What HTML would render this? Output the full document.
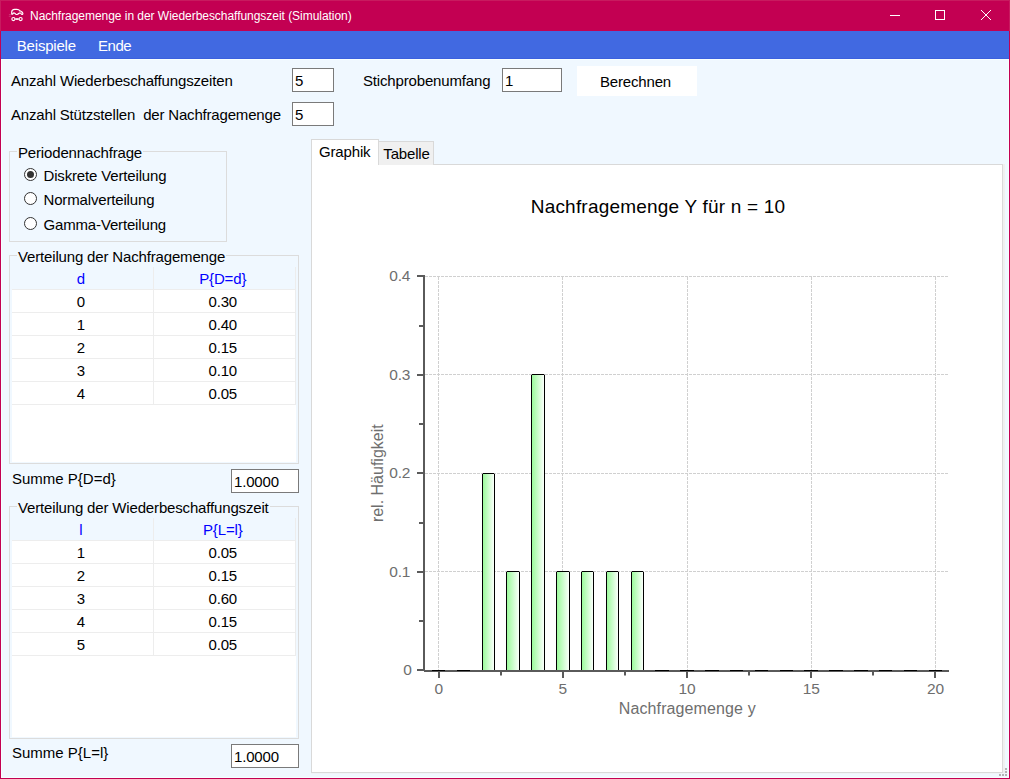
<!DOCTYPE html>
<html lang="de"><head><meta charset="utf-8">
<title>Nachfragemenge in der Wiederbeschaffungszeit (Simulation)</title>
<style>
html,body{margin:0;padding:0}
body{width:1010px;height:779px;overflow:hidden;background:#F0F8FF;position:relative;
 font-family:"Liberation Sans",sans-serif;font-size:15px;letter-spacing:-0.16px;color:#000;font-variant-ligatures:none}
div{position:absolute;box-sizing:border-box;white-space:pre}
.t{line-height:17px}
.title{left:0;top:0;width:1010px;height:31px;background:#C30052}
.title .cap{left:30px;top:9px;color:#fff;font-size:12px;letter-spacing:-0.04px;line-height:15px}
.menu{left:1px;top:31px;width:1008px;height:28px;background:#4169E1;border-bottom:1px solid #3B60DE;color:#fff;font-size:15px;letter-spacing:-0.2px}
.menu div{line-height:28px;top:1px}
.wb{background:#C30052}
.in{background:#fff;border:1px solid #7A7A7A;height:24px;line-height:22px;padding-left:2px;padding-top:1px}
.btn{left:577px;top:66px;width:120px;height:30px;background:#fff;text-align:center;line-height:32px;padding-right:3px}
.gb{border:1px solid #DCDCDC}
.lg{background:#F0F8FF;line-height:17px;padding:0 1px}
.rb{width:13px;height:13px;border-radius:50%;border:1px solid #333;background:#fff}
.rb.on::after{content:"";position:absolute;left:2px;top:2px;width:7px;height:7px;border-radius:50%;background:#333}
.gridbg{left:12px;width:284px;background:#fff}
.hc{height:23px;line-height:23px;text-align:center;color:#0000FF;padding-right:3.5px}
.c{height:23px;line-height:23px;text-align:center;padding-right:3.5px}
.hl{left:12px;width:284px;height:1px;background:#EDEDED}
.vl{left:153px;width:1px;background:#EDEDED}
.tabsel{left:311px;top:139px;width:68px;height:26px;background:#fff;border:1px solid #D9D9D9;border-bottom:none}
.tab2{left:378px;top:141px;width:56px;height:24px;background:#F0F0F0;border:1px solid #D9D9D9;border-bottom:none}
.panel{left:311px;top:164px;width:692px;height:609px;background:#fff;border:1px solid #D9D9D9}
svg{position:absolute;left:0;top:0}
svg .g{stroke:#D0D0D0;stroke-width:1;stroke-dasharray:3 1}
svg .ax{stroke:#5A5A5A;stroke-width:2}
svg text{letter-spacing:0;font-variant-ligatures:none}
svg .lb{font-size:15.5px;fill:#6E6E6E;letter-spacing:-0.2px}
svg .at{font-size:16px;fill:#6E6E6E}
svg .ti{font-size:19px;fill:#000;letter-spacing:0.2px}
</style></head><body>
<div class="title">
 <svg width="40" height="31" viewBox="0 0 40 31"><g fill="none" stroke="#fff" stroke-width="1.15" stroke-linejoin="round" stroke-linecap="round">
  <path d="M11.7 14.1 L11.7 12 Q11.8 9.5 14.6 9.35 L16.9 9.35 Q18.7 9.4 20 10.6 L22.4 12.3 Q23.3 13.2 22.7 14.3 L21.6 14.3 Q20.6 12.7 19.4 13.1 Q18.5 13.4 17.6 14.3 Q16.6 14.8 15.8 14.2 Q14.8 12.9 13.9 12.9 Q13 13 12.7 14.1 Z"/>
  <path d="M19.2 11.1 L21.6 12.9" stroke-width="0.7" opacity="0.7"/>
  <circle cx="13.4" cy="19.05" r="1.55"/><circle cx="20.6" cy="19.05" r="1.55"/><path d="M15.3 19.05 H18.7" stroke-width="1.7" stroke-linecap="butt"/>
  <path d="M9.3 14.6 H10.8 M9.2 16.3 H10.6" stroke-width="0.8" opacity="0.25"/></g></svg>
 <div class="cap">Nachfragemenge in der Wiederbeschaffungszeit (Simulation)</div>
 <svg width="1010" height="31" viewBox="0 0 1010 31"><g fill="none" stroke="#fff" stroke-width="1">
  <path d="M890 15.5 H900"/><rect x="935.5" y="10.5" width="9" height="9"/><path d="M981 10 L991 20 M991 10 L981 20"/></g></svg>
</div>
<div class="wb" style="left:0;top:0;width:1px;height:779px"></div>
<div style="left:1px;top:59px;width:1008px;height:719px;border:1px solid #F7FFFF"></div>
<div class="wb" style="left:1009px;top:0;width:1px;height:779px"></div>
<div class="wb" style="left:0;top:778px;width:1010px;height:1px"></div>
<div style="left:0;top:0;width:1010px;height:31px;border:1px solid #C81B5F;border-bottom:none"></div>
<div class="menu"><div style="left:15.8px">Beispiele</div><div style="left:97px;letter-spacing:-0.45px">Ende</div></div>

<div class="t" style="left:11px;top:72px">Anzahl Wiederbeschaffungszeiten</div>
<div class="in" style="left:292px;top:68px;width:42px">5</div>
<div class="t" style="left:363px;top:72px">Stichprobenumfang</div>
<div class="in" style="left:502px;top:68px;width:60px">1</div>
<div class="btn">Berechnen</div>
<div class="t" style="left:11px;top:106px;letter-spacing:-0.18px">Anzahl Stützstellen  der Nachfragemenge</div>
<div class="in" style="left:292px;top:102px;width:42px">5</div>

<div class="gb" style="left:9px;top:151px;width:218px;height:91px"></div>
<div class="lg" style="left:17px;top:144px">Periodennachfrage</div>
<div class="rb on" style="left:24px;top:168px"></div><div class="t" style="left:43.5px;top:167px">Diskrete Verteilung</div>
<div class="rb" style="left:24px;top:192px"></div><div class="t" style="left:43.5px;top:191px">Normalverteilung</div>
<div class="rb" style="left:24px;top:217px"></div><div class="t" style="left:43.5px;top:216px">Gamma-Verteilung</div>

<div class="gb" style="left:9px;top:255px;width:290px;height:209px"></div>
<div class="lg" style="left:17px;top:248px">Verteilung der Nachfragemenge</div>
<div class="gridbg" style="top:290px;height:172px"></div>
<div class="hc" style="left:12px;top:267px;width:141px">d</div>
<div class="hc" style="left:154px;top:267px;width:141px">P{D=d}</div>
<div class="hl" style="top:289px"></div>
<div class="vl" style="top:267px;height:138px"></div>
<div class="vl" style="left:295px;top:267px;height:138px"></div>
<div class="c" style="left:12px;top:290px;width:141px">0</div>
<div class="c" style="left:154px;top:290px;width:141px">0.30</div>
<div class="hl" style="top:312px"></div>
<div class="c" style="left:12px;top:313px;width:141px">1</div>
<div class="c" style="left:154px;top:313px;width:141px">0.40</div>
<div class="hl" style="top:335px"></div>
<div class="c" style="left:12px;top:336px;width:141px">2</div>
<div class="c" style="left:154px;top:336px;width:141px">0.15</div>
<div class="hl" style="top:358px"></div>
<div class="c" style="left:12px;top:359px;width:141px">3</div>
<div class="c" style="left:154px;top:359px;width:141px">0.10</div>
<div class="hl" style="top:381px"></div>
<div class="c" style="left:12px;top:382px;width:141px">4</div>
<div class="c" style="left:154px;top:382px;width:141px">0.05</div>
<div class="hl" style="top:404px"></div>
<div class="t" style="left:12px;top:470px;letter-spacing:0">Summe P{D=d}</div>
<div class="in" style="left:231px;top:469px;width:68px">1.0000</div>

<div class="gb" style="left:9px;top:506px;width:290px;height:233px"></div>
<div class="lg" style="left:17px;top:499px">Verteilung der Wiederbeschaffungszeit</div>
<div class="gridbg" style="top:541px;height:196px"></div>
<div class="hc" style="left:12px;top:518px;width:141px">l</div>
<div class="hc" style="left:154px;top:518px;width:141px">P{L=l}</div>
<div class="hl" style="top:540px"></div>
<div class="vl" style="top:518px;height:138px"></div>
<div class="vl" style="left:295px;top:518px;height:138px"></div>
<div class="c" style="left:12px;top:541px;width:141px">1</div>
<div class="c" style="left:154px;top:541px;width:141px">0.05</div>
<div class="hl" style="top:563px"></div>
<div class="c" style="left:12px;top:564px;width:141px">2</div>
<div class="c" style="left:154px;top:564px;width:141px">0.15</div>
<div class="hl" style="top:586px"></div>
<div class="c" style="left:12px;top:587px;width:141px">3</div>
<div class="c" style="left:154px;top:587px;width:141px">0.60</div>
<div class="hl" style="top:609px"></div>
<div class="c" style="left:12px;top:610px;width:141px">4</div>
<div class="c" style="left:154px;top:610px;width:141px">0.15</div>
<div class="hl" style="top:632px"></div>
<div class="c" style="left:12px;top:633px;width:141px">5</div>
<div class="c" style="left:154px;top:633px;width:141px">0.05</div>
<div class="hl" style="top:655px"></div>
<div class="t" style="left:12px;top:744px;letter-spacing:0">Summe P{L=l}</div>
<div class="in" style="left:231px;top:744px;width:68px">1.0000</div>

<div style="left:1003px;top:164px;width:2px;height:610px;background:#F0F0F0"></div><div style="left:311px;top:773px;width:694px;height:1px;background:#F0F4F8"></div>
<div class="panel"></div>
<div class="tab2"><div class="t" style="left:4.3px;top:2.5px">Tabelle</div></div>
<div class="tabsel"><div class="t" style="left:7px;top:2.5px">Graphik</div></div>

<svg width="1010" height="779" viewBox="0 0 1010 779" style="pointer-events:none">
<defs><linearGradient id="bg" x1="0" y1="0" x2="1" y2="0"><stop offset="0" stop-color="#98FB98"/><stop offset="1" stop-color="#FFFFFF"/></linearGradient></defs>
<line x1="438.5" y1="277" x2="438.5" y2="670" class="g"/>
<line x1="562.5" y1="277" x2="562.5" y2="670" class="g"/>
<line x1="687.5" y1="277" x2="687.5" y2="670" class="g"/>
<line x1="811.5" y1="277" x2="811.5" y2="670" class="g"/>
<line x1="935.5" y1="277" x2="935.5" y2="670" class="g"/>
<line x1="425" y1="571.5" x2="949" y2="571.5" class="g"/>
<line x1="425" y1="473.5" x2="949" y2="473.5" class="g"/>
<line x1="425" y1="374.5" x2="949" y2="374.5" class="g"/>
<line x1="425" y1="276.5" x2="949" y2="276.5" class="g"/>
<rect x="482.5" y="473.5" width="12" height="197" fill="url(#bg)" stroke="#000" stroke-width="1"/>
<rect x="482" y="473" width="1" height="1" fill="#fff" opacity="0.65"/><rect x="494" y="473" width="1" height="1" fill="#fff" opacity="0.65"/>
<rect x="506.5" y="571.5" width="13" height="99" fill="url(#bg)" stroke="#000" stroke-width="1"/>
<rect x="506" y="571" width="1" height="1" fill="#fff" opacity="0.65"/><rect x="519" y="571" width="1" height="1" fill="#fff" opacity="0.65"/>
<rect x="531.5" y="374.5" width="13" height="296" fill="url(#bg)" stroke="#000" stroke-width="1"/>
<rect x="531" y="374" width="1" height="1" fill="#fff" opacity="0.65"/><rect x="544" y="374" width="1" height="1" fill="#fff" opacity="0.65"/>
<rect x="556.5" y="571.5" width="13" height="99" fill="url(#bg)" stroke="#000" stroke-width="1"/>
<rect x="556" y="571" width="1" height="1" fill="#fff" opacity="0.65"/><rect x="569" y="571" width="1" height="1" fill="#fff" opacity="0.65"/>
<rect x="581.5" y="571.5" width="12" height="99" fill="url(#bg)" stroke="#000" stroke-width="1"/>
<rect x="581" y="571" width="1" height="1" fill="#fff" opacity="0.65"/><rect x="593" y="571" width="1" height="1" fill="#fff" opacity="0.65"/>
<rect x="606.5" y="571.5" width="12" height="99" fill="url(#bg)" stroke="#000" stroke-width="1"/>
<rect x="606" y="571" width="1" height="1" fill="#fff" opacity="0.65"/><rect x="618" y="571" width="1" height="1" fill="#fff" opacity="0.65"/>
<rect x="631.5" y="571.5" width="12" height="99" fill="url(#bg)" stroke="#000" stroke-width="1"/>
<rect x="631" y="571" width="1" height="1" fill="#fff" opacity="0.65"/><rect x="643" y="571" width="1" height="1" fill="#fff" opacity="0.65"/>
<line x1="424" y1="275" x2="424" y2="671" class="ax"/>
<line x1="424" y1="671" x2="949" y2="671" class="ax"/>
<line x1="417" y1="670" x2="424" y2="670" class="ax"/>
<line x1="419" y1="621" x2="424" y2="621" class="ax"/>
<line x1="417" y1="572" x2="424" y2="572" class="ax"/>
<line x1="419" y1="523" x2="424" y2="523" class="ax"/>
<line x1="417" y1="473" x2="424" y2="473" class="ax"/>
<line x1="419" y1="424" x2="424" y2="424" class="ax"/>
<line x1="417" y1="375" x2="424" y2="375" class="ax"/>
<line x1="419" y1="326" x2="424" y2="326" class="ax"/>
<line x1="417" y1="276" x2="424" y2="276" class="ax"/>
<line x1="439" y1="671" x2="439" y2="678" class="ax"/>
<line x1="501" y1="671" x2="501" y2="675.5" class="ax"/>
<line x1="563" y1="671" x2="563" y2="678" class="ax"/>
<line x1="625" y1="671" x2="625" y2="675.5" class="ax"/>
<line x1="687" y1="671" x2="687" y2="678" class="ax"/>
<line x1="749" y1="671" x2="749" y2="675.5" class="ax"/>
<line x1="811" y1="671" x2="811" y2="678" class="ax"/>
<line x1="873" y1="671" x2="873" y2="675.5" class="ax"/>
<line x1="935" y1="671" x2="935" y2="678" class="ax"/>
<line x1="432" y1="670.5" x2="445" y2="670.5" stroke="#000" stroke-width="1"/>
<line x1="457" y1="670.5" x2="470" y2="670.5" stroke="#000" stroke-width="1"/>
<line x1="655" y1="670.5" x2="669" y2="670.5" stroke="#000" stroke-width="1"/>
<line x1="680" y1="670.5" x2="694" y2="670.5" stroke="#000" stroke-width="1"/>
<line x1="705" y1="670.5" x2="719" y2="670.5" stroke="#000" stroke-width="1"/>
<line x1="730" y1="670.5" x2="743" y2="670.5" stroke="#000" stroke-width="1"/>
<line x1="755" y1="670.5" x2="768" y2="670.5" stroke="#000" stroke-width="1"/>
<line x1="780" y1="670.5" x2="793" y2="670.5" stroke="#000" stroke-width="1"/>
<line x1="804" y1="670.5" x2="818" y2="670.5" stroke="#000" stroke-width="1"/>
<line x1="829" y1="670.5" x2="843" y2="670.5" stroke="#000" stroke-width="1"/>
<line x1="854" y1="670.5" x2="868" y2="670.5" stroke="#000" stroke-width="1"/>
<line x1="879" y1="670.5" x2="892" y2="670.5" stroke="#000" stroke-width="1"/>
<line x1="904" y1="670.5" x2="917" y2="670.5" stroke="#000" stroke-width="1"/>
<line x1="929" y1="670.5" x2="942" y2="670.5" stroke="#000" stroke-width="1"/>
<text x="411.6" y="674.5" text-anchor="end" class="lb">0</text>
<text x="410.3" y="576.5" text-anchor="end" class="lb">0.1</text>
<text x="410.3" y="477.5" text-anchor="end" class="lb">0.2</text>
<text x="410.3" y="379.5" text-anchor="end" class="lb">0.3</text>
<text x="410.3" y="280.5" text-anchor="end" class="lb">0.4</text>
<text x="438.6" y="694.4" text-anchor="middle" class="lb">0</text>
<text x="562.8" y="694.4" text-anchor="middle" class="lb">5</text>
<text x="687.0" y="694.4" text-anchor="middle" class="lb">10</text>
<text x="811.2" y="694.4" text-anchor="middle" class="lb">15</text>
<text x="935.4" y="694.4" text-anchor="middle" class="lb">20</text>
<text x="687.3" y="714.4" text-anchor="middle" class="at" style="letter-spacing:0.11px">Nachfragemenge y</text>
<text transform="translate(382.5,473.2) rotate(-90)" text-anchor="middle" class="at">rel. Häufigkeit</text>
<text x="658" y="213" text-anchor="middle" class="ti">Nachfragemenge Y für n = 10</text>
<g fill="#B4B4B4"><rect x="1005" y="768" width="2" height="2"/><rect x="1005" y="771" width="2" height="2"/><rect x="1005" y="774" width="2" height="2"/><rect x="1002" y="774" width="2" height="2"/><rect x="999" y="774" width="2" height="2"/></g>
</svg>
</body></html>
